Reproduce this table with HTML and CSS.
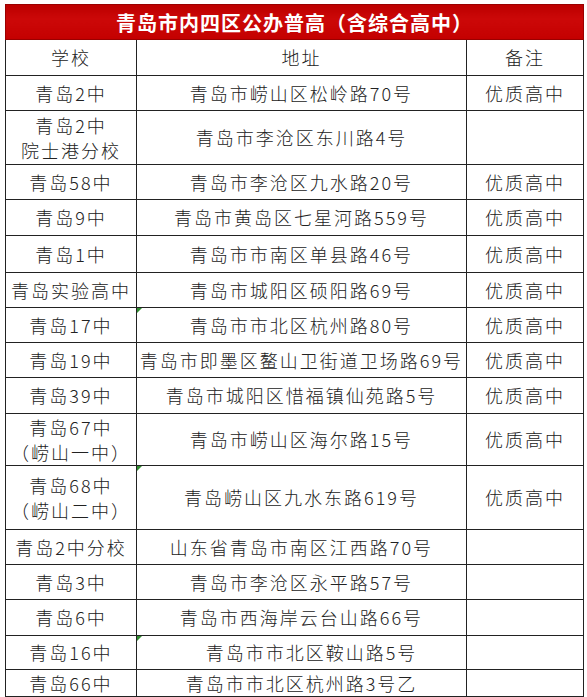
FILE: index.html
```html
<!DOCTYPE html>
<html lang="zh-CN">
<head>
<meta charset="utf-8">
<title>青岛市内四区公办普高</title>
<link rel="stylesheet" href="styles.css">
</head>
<body>
<table class="sheet">
  <colgroup>
    <col class="c-school">
    <col class="c-addr">
    <col class="c-note">
  </colgroup>
  <thead>
    <tr class="r-title"><th colspan="3" class="title">青岛市内四区公办普高（含综合高中）</th></tr>
    <tr class="r-head"><th>学校</th><th>地址</th><th>备注</th></tr>
  </thead>
  <tbody>
    <tr class="h35"><td>青岛2中</td><td>青岛市崂山区松岭路70号</td><td>优质高中</td></tr>
    <tr class="h54"><td>青岛2中<br>院士港分校</td><td>青岛市李沧区东川路4号</td><td></td></tr>
    <tr class="h35"><td>青岛58中</td><td>青岛市李沧区九水路20号</td><td>优质高中</td></tr>
    <tr class="h36"><td>青岛9中</td><td>青岛市黄岛区七星河路559号</td><td>优质高中</td></tr>
    <tr class="h37"><td>青岛1中</td><td>青岛市市南区单县路46号</td><td>优质高中</td></tr>
    <tr class="h35"><td>青岛实验高中</td><td>青岛市城阳区硕阳路69号</td><td>优质高中</td></tr>
    <tr class="h35"><td>青岛17中</td><td class="flag">青岛市市北区杭州路80号</td><td>优质高中</td></tr>
    <tr class="h35"><td>青岛19中</td><td>青岛市即墨区鳌山卫街道卫场路69号</td><td>优质高中</td></tr>
    <tr class="h36"><td>青岛39中</td><td>青岛市城阳区惜福镇仙苑路5号</td><td>优质高中</td></tr>
    <tr class="h52"><td>青岛67中<br>（崂山一中）</td><td>青岛市崂山区海尔路15号</td><td>优质高中</td></tr>
    <tr class="h64"><td>青岛68中<br>（崂山二中）</td><td class="flag">青岛崂山区九水东路619号</td><td>优质高中</td></tr>
    <tr class="h35"><td>青岛2中分校</td><td>山东省青岛市南区江西路70号</td><td></td></tr>
    <tr class="h35"><td>青岛3中</td><td>青岛市李沧区永平路57号</td><td></td></tr>
    <tr class="h36"><td>青岛6中</td><td>青岛市西海岸云台山路66号</td><td></td></tr>
    <tr class="h34"><td>青岛16中</td><td class="flag indent">青岛市市北区鞍山路5号</td><td></td></tr>
    <tr class="h27"><td>青岛66中</td><td>青岛市市北区杭州路3号乙</td><td></td></tr>
  </tbody>
</table>
</body>
</html>
```

FILE: styles.css
```css
html, body {
  margin: 0;
  padding: 0;
  background: #ffffff;
}

body {
  padding: 4px 0 0 5px;
  font-family: "Noto Sans CJK SC", "Noto Sans", "DejaVu Sans", sans-serif;
  color: #222222;
}

.sheet {
  width: 578px;
  border-collapse: collapse;
  table-layout: fixed;
}

.c-school { width: 131px; }
.c-addr { width: 330px; }
.c-note { width: 117px; }

.sheet th,
.sheet td {
  border: 1px solid #222222;
  padding: 0;
  text-align: center;
  vertical-align: middle;
  font-size: 18px;
  font-weight: 300;
  line-height: 25px;
  letter-spacing: 2px;
  white-space: nowrap;
}

.sheet .title {
  background: linear-gradient(#bc0000, #cc0808 40%, #c40000);
  border: 1px solid #9a0000;
  color: #ffffff;
  font-weight: 700;
  font-size: 20px;
  letter-spacing: 1px;
}

.r-title { height: 35px; }
.r-head { height: 36px; }
.h27 { height: 27px; }
.h34 { height: 34px; }
.h35 { height: 35px; }
.h36 { height: 36px; }
.h37 { height: 37px; }
.h52 { height: 52px; }
.h54 { height: 54px; }
.h64 { height: 64px; }

.sheet td.flag {
  position: relative;
}

.sheet td.flag::before {
  content: "";
  position: absolute;
  left: 0;
  top: 0;
  width: 0;
  height: 0;
  border-top: 5px solid #2e8b2e;
  border-right: 5px solid transparent;
}

.sheet td.indent {
  padding-left: 20px;
}
```
